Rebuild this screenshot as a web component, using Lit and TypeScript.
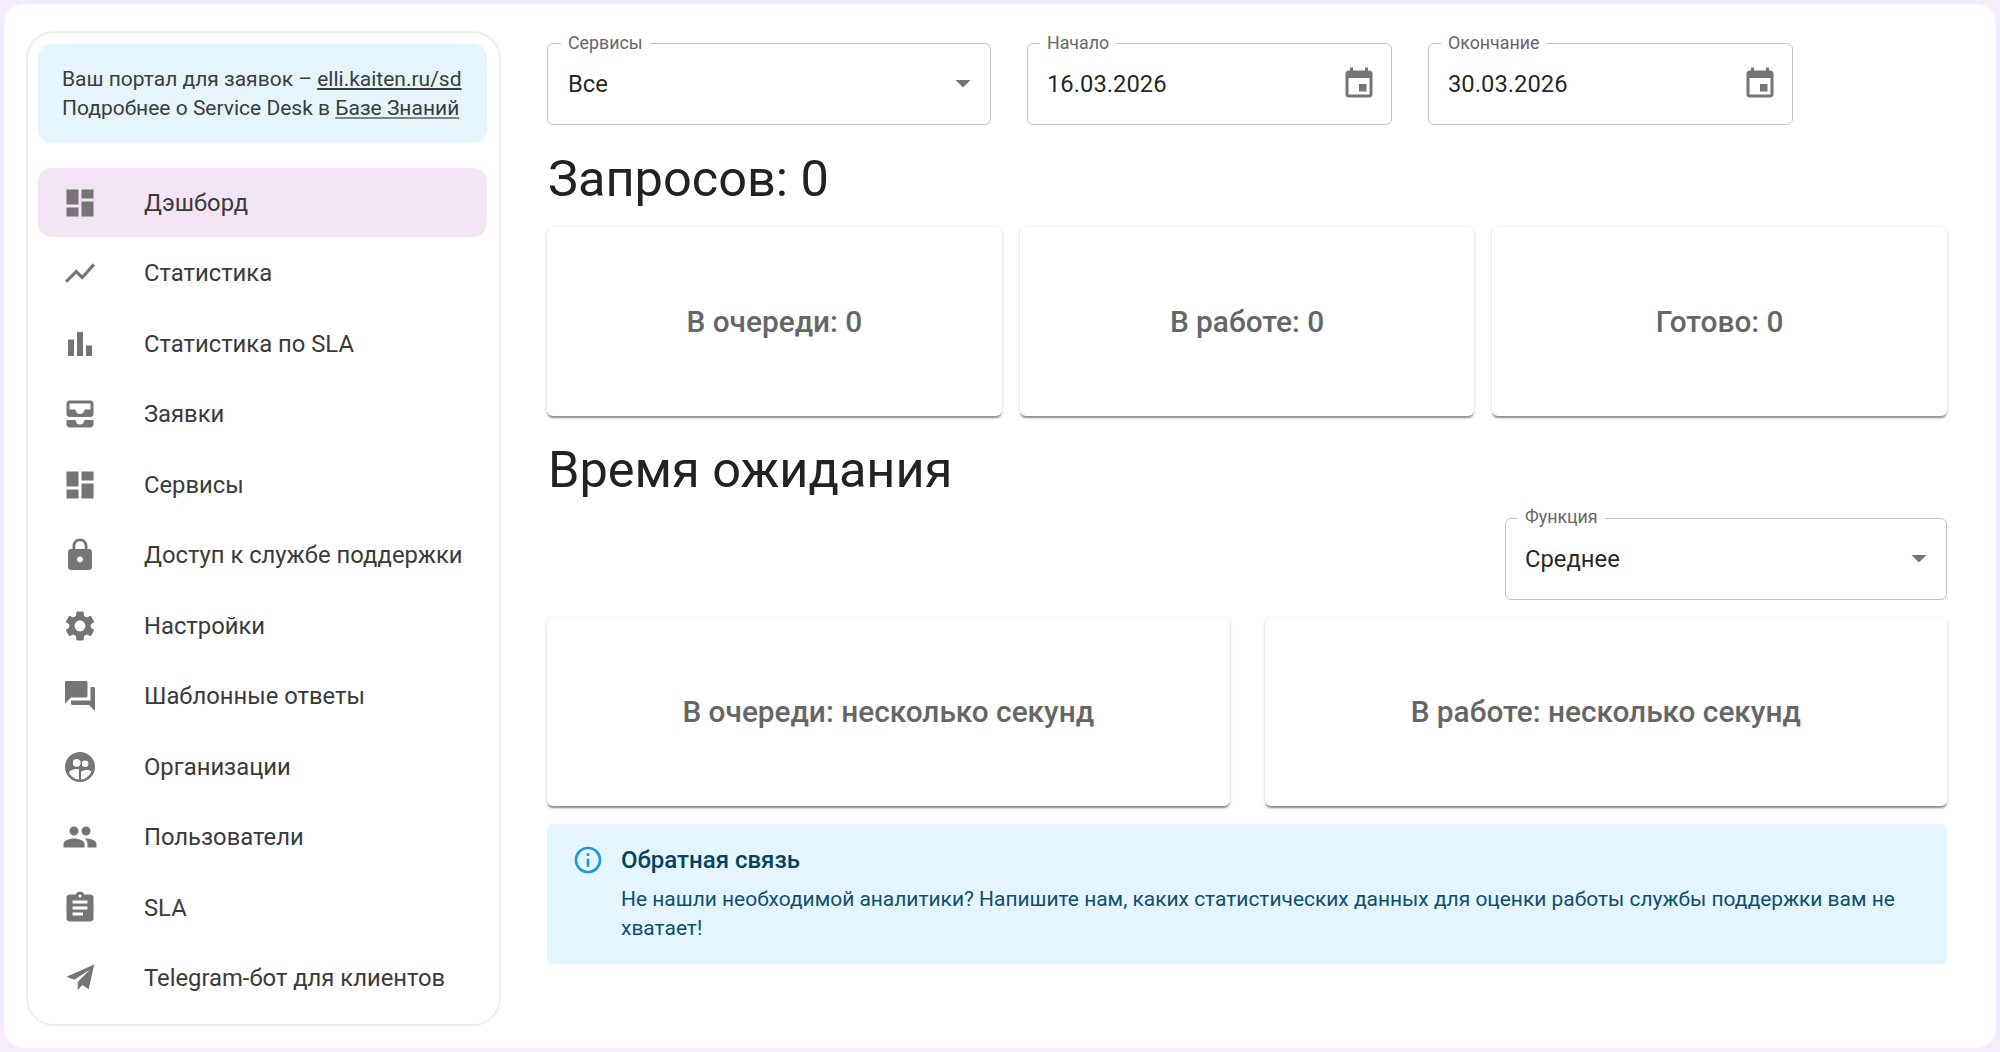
import { LitElement, css, html, svg } from 'lit';
import { customElement } from 'lit/decorators.js';

const ICONS: Record<string, string> = {
  dashboard: 'M3 13h8V3H3v10zm0 8h8v-6H3v6zm10 0h8V11h-8v10zm0-18v6h8V3h-8z',
  chart: 'M3.5 18.49l6-6.01 4 4L22 6.92l-1.41-1.41-7.09 7.97-4-4L2 16.99z',
  bars: 'M4 9h4v11H4zm12 4h4v7h-4zm-6-9h4v16h-4z',
  inbox: 'M19 3H5c-1.1 0-2 .9-2 2v7c0 1.1.9 2 2 2h14c1.1 0 2-.9 2-2V5c0-1.1-.9-2-2-2zm0 6h-4c0 1.62-1.38 3-3 3s-3-1.38-3-3H5V5h14v4zm-4 7h6v3c0 1.1-.9 2-2 2H5c-1.1 0-2-.9-2-2v-3h6c0 1.66 1.34 3 3 3s3-1.34 3-3z',
  lock: 'M18 8h-1V6c0-2.76-2.24-5-5-5S7 3.24 7 6v2H6c-1.1 0-2 .9-2 2v10c0 1.1.9 2 2 2h12c1.1 0 2-.9 2-2V10c0-1.1-.9-2-2-2zm-6 9c-1.1 0-2-.9-2-2s.9-2 2-2 2 .9 2 2-.9 2-2 2zm3.1-9H8.9V6c0-1.71 1.39-3.1 3.1-3.1 1.71 0 3.1 1.39 3.1 3.1v2z',
  gear: 'M19.14 12.94c.04-.3.06-.61.06-.94 0-.32-.02-.64-.07-.94l2.03-1.58c.18-.14.23-.41.12-.61l-1.92-3.32c-.12-.22-.37-.29-.59-.22l-2.39.96c-.5-.38-1.03-.7-1.62-.94l-.36-2.54c-.04-.24-.24-.41-.48-.41h-3.84c-.24 0-.43.17-.47.41l-.36 2.54c-.59.24-1.13.57-1.62.94l-2.39-.96c-.22-.08-.47 0-.59.22L2.74 8.87c-.12.21-.08.47.12.61l2.03 1.58c-.05.3-.09.63-.09.94s.02.64.07.94l-2.03 1.58c-.18.14-.23.41-.12.61l1.92 3.32c.12.22.37.29.59.22l2.39-.96c.5.38 1.03.7 1.62.94l.36 2.54c.05.24.24.41.48.41h3.84c.24 0 .44-.17.47-.41l.36-2.54c.59-.24 1.13-.56 1.62-.94l2.39.96c.22.08.47 0 .59-.22l1.92-3.32c.12-.22.07-.47-.12-.61l-2.01-1.58zM12 15.6c-1.98 0-3.6-1.62-3.6-3.6s1.62-3.6 3.6-3.6 3.6 1.62 3.6 3.6-1.62 3.6-3.6 3.6z',
  forum: 'M21 6h-2v9H6v2c0 .55.45 1 1 1h11l4 4V7c0-.55-.45-1-1-1zm-4 6V3c0-.55-.45-1-1-1H3c-.55 0-1 .45-1 1v14l4-4h10c.55 0 1-.45 1-1z',
  org: 'M12 2C6.48 2 2 6.48 2 12s4.48 10 10 10 10-4.48 10-10S17.52 2 12 2zM9.8 6.6a2.6 2.6 0 1 1 0 5.2 2.6 2.6 0 0 1 0-5.2zm5.6 1a2.2 2.2 0 1 1 0 4.4 2.2 2.2 0 0 1 0-4.4zM11.3 20.4c-3-.3-5.6-2.3-6.7-5.1 1.3-1.3 3.1-2 5.1-2 .6 0 1.2.1 1.6.2zm1.4 0v-5.2c1-.8 2.4-1.2 3.7-1.2 1.2 0 2.3.3 3.1.8-1 3-3.6 5.2-6.8 5.6z',
  people: 'M16 11c1.66 0 2.99-1.34 2.99-3S17.66 5 16 5c-1.66 0-3 1.34-3 3s1.34 3 3 3zm-8 0c1.66 0 2.99-1.34 2.99-3S9.66 5 8 5C6.34 5 5 6.34 5 8s1.34 3 3 3zm0 2c-2.33 0-7 1.17-7 3.5V19h14v-2.5c0-2.33-4.67-3.5-7-3.5zm8 0c-.29 0-.62.02-.97.05 1.16.84 1.97 1.97 1.97 3.45V19h6v-2.5c0-2.33-4.67-3.5-7-3.5z',
  clipboard: 'M19 3h-4.18C14.4 1.84 13.3 1 12 1c-1.3 0-2.4.84-2.82 2H5c-1.1 0-2 .9-2 2v14c0 1.1.9 2 2 2h14c1.1 0 2-.9 2-2V5c0-1.1-.9-2-2-2zm-7 0c.55 0 1 .45 1 1s-.45 1-1 1-1-.45-1-1 .45-1 1-1zm2 14H7v-2h7v2zm3-4H7v-2h10v2zm0-4H7V7h10v2z',
  plane: 'M21.5 3 3 11.2l5.2 2L18.5 6.5 10.5 14.7v5.3l3.1-3.4 4.2 2.9z',
  event: 'M17 12h-5v5h5v-5zM16 1v2H8V1H6v2H5c-1.11 0-1.99.9-1.99 2L3 19c0 1.1.89 2 2 2h14c1.1 0 2-.9 2-2V5c0-1.1-.9-2-2-2h-1V1h-2zm3 18H5V8h14v11z',
  arrow: 'M7 10l5 5 5-5z',
  info: 'M11,9H13V7H11V9M12,20C7.59,20 4,16.41 4,12C4,7.59 7.59,4 12,4C16.41,4 20,7.59 20,12C20,16.41 16.41,20 12,20M12,2A10,10 0 0,0 2,12A10,10 0 0,0 12,22A10,10 0 0,0 22,12A10,10 0 0,0 12,2M11,17H13V11H11V17Z',
};

const NAV = [
  ['dashboard', 'Дэшборд'],
  ['chart', 'Статистика'],
  ['bars', 'Статистика по SLA'],
  ['inbox', 'Заявки'],
  ['dashboard', 'Сервисы'],
  ['lock', 'Доступ к службе поддержки'],
  ['gear', 'Настройки'],
  ['forum', 'Шаблонные ответы'],
  ['org', 'Организации'],
  ['people', 'Пользователи'],
  ['clipboard', 'SLA'],
  ['plane', 'Telegram-бот для клиентов'],
];

const icon = (name: string, cls = 'icon') =>
  html`<svg class=${cls} viewBox="0 0 24 24" fill="currentColor">${svg`<path fill-rule="evenodd" d=${ICONS[name]}></path>`}</svg>`;

@customElement('app-root')
export class AppRoot extends LitElement {
  static styles = css`
    :host {
      display: block;
      height: 1052px;
      box-sizing: border-box;
      padding: 4px;
      background: #f5edfd;
      font-family: Roboto, sans-serif;
      color: rgba(0, 0, 0, 0.87);
    }

    .panel {
      display: flex;
      height: 1044px;
      box-sizing: border-box;
      padding: 26.5px 49px 0 22px;
      background: #fff;
      border-radius: 20px;
    }

    .sidebar {
      flex: none;
      width: 475px;
      height: 995px;
      box-sizing: border-box;
      padding: 11px 12px 11px 10px;
      border: 2px solid #eeeeee;
      border-radius: 28px;
    }

    .portal {
      height: 99px;
      box-sizing: border-box;
      padding: 21px 24px;
      background: #e4f5fd;
      border-radius: 14px;
      font-size: 21px;
      line-height: 29.5px;
      color: #3c3c3c;
      white-space: nowrap;
    }

    .portal a {
      color: inherit;
      text-decoration: underline;
    }

    .portal a.soft {
      text-decoration-color: rgba(0, 0, 0, 0.45);
    }

    nav {
      display: flex;
      flex-direction: column;
      gap: 1.5px;
      margin-top: 25.6px;
    }

    .item {
      display: flex;
      align-items: center;
      height: 69px;
      padding-left: 23.7px;
      border-radius: 14px;
      font-size: 23.8px;
      color: #3a3a3a;
    }

    .item.active {
      background: #f3e5f5;
    }

    .icon {
      flex: none;
      width: 36px;
      height: 36px;
      margin-right: 46.3px;
      color: #757575;
    }

    main {
      flex: 1;
      min-width: 0;
      margin-left: 46px;
      padding-top: 12.5px;
    }

    .filters {
      display: flex;
      gap: 36px;
    }

    .field {
      position: relative;
      display: flex;
      align-items: center;
      justify-content: space-between;
      box-sizing: border-box;
      height: 82px;
      padding: 0 21px 0 20px;
      border: 1.5px solid #c4c4c4;
      border-radius: 6px;
      font-size: 23.8px;
    }

    .field.services {
      width: 444px;
    }

    .field.date {
      width: 365px;
      padding-left: 19px;
    }

    .field.fn {
      width: 442px;
      margin: 0 0 0 auto;
      padding-left: 19px;
    }

    .field label {
      position: absolute;
      top: -11.5px;
      left: 12px;
      padding: 0 7px;
      background: #fff;
      font-size: 17.8px;
      line-height: 20px;
      color: #666;
    }

    .field.services label {
      left: 13px;
    }

    .field .value {
      transform: translateY(-0.5px);
    }

    .caret {
      width: 36px;
      height: 36px;
      margin-right: -12px;
      color: #757575;
      transform: translateY(-1px);
    }

    .cal {
      width: 36px;
      height: 36px;
      margin-right: -7px;
      color: #757575;
    }

    h2 {
      margin: 0;
      padding-left: 1px;
      font-size: 50.5px;
      font-weight: 400;
      line-height: 60px;
      color: #222;
    }

    h2.requests {
      margin: 23.5px 0 18px;
    }

    h2.wait {
      margin: 24px 0 18px;
    }

    .cards {
      display: grid;
      gap: 18px;
      height: 188px;
    }

    .cards.three {
      grid-template-columns: repeat(3, 1fr);
      height: 189px;
    }

    .cards.two {
      grid-template-columns: repeat(2, 1fr);
      gap: 35px;
      margin-top: 18px;
    }

    .card {
      display: flex;
      align-items: center;
      justify-content: center;
      background: #fff;
      border-radius: 6px;
      box-shadow: 0 3px 1.5px -1.5px rgba(0, 0, 0, 0.24), 0 1.5px 1.5px 0 rgba(0, 0, 0, 0.16), 0 1.5px 4.5px 0 rgba(0, 0, 0, 0.12);
      font-size: 29.8px;
      font-weight: 500;
      color: #666;
    }

    .alert {
      display: flex;
      box-sizing: border-box;
      height: 140px;
      margin-top: 18px;
      padding: 20px 25px;
      background: #e4f5fd;
      border-radius: 6px;
      color: #0d4f6e;
    }

    .alert-icon {
      flex: none;
      width: 32px;
      height: 32px;
      margin-right: 17px;
      color: #1c96dc;
    }

    .alert-title {
      font-size: 24px;
      font-weight: 500;
      line-height: 33px;
      color: #014361;
    }

    .alert-text {
      margin-top: 8px;
      font-size: 20.95px;
      line-height: 29.5px;
    }
  `;

  renderField(kind: string, label: string, value: string, end: string) {
    return html`
      <div class="field ${kind}">
        <label>${label}</label>
        <span class="value">${value}</span>
        ${icon(end, end === 'arrow' ? 'caret' : 'cal')}
      </div>
    `;
  }

  render() {
    return html`
      <div class="panel">
        <aside class="sidebar">
          <div class="portal">
            Ваш портал для заявок – <a href="#">elli.kaiten.ru/sd</a><br />
            Подробнее о Service Desk в <a class="soft" href="#">Базе Знаний</a>
          </div>
          <nav>
            ${NAV.map(([name, text], i) => html`
              <div class="item ${i === 0 ? 'active' : ''}">${icon(name)}<span>${text}</span></div>
            `)}
          </nav>
        </aside>
        <main>
          <div class="filters">
            ${this.renderField('services', 'Сервисы', 'Все', 'arrow')}
            ${this.renderField('date', 'Начало', '16.03.2026', 'event')}
            ${this.renderField('date', 'Окончание', '30.03.2026', 'event')}
          </div>
          <h2 class="requests">Запросов: 0</h2>
          <div class="cards three">
            <div class="card">В очереди: 0</div>
            <div class="card">В работе: 0</div>
            <div class="card">Готово: 0</div>
          </div>
          <h2 class="wait">Время ожидания</h2>
          ${this.renderField('fn', 'Функция', 'Среднее', 'arrow')}
          <div class="cards two">
            <div class="card">В очереди: несколько секунд</div>
            <div class="card">В работе: несколько секунд</div>
          </div>
          <div class="alert">
            ${icon('info', 'alert-icon')}
            <div>
              <div class="alert-title">Обратная связь</div>
              <div class="alert-text">Не нашли необходимой аналитики? Напишите нам, каких статистических данных для оценки работы службы поддержки вам не хватает!</div>
            </div>
          </div>
        </main>
      </div>
    `;
  }
}
